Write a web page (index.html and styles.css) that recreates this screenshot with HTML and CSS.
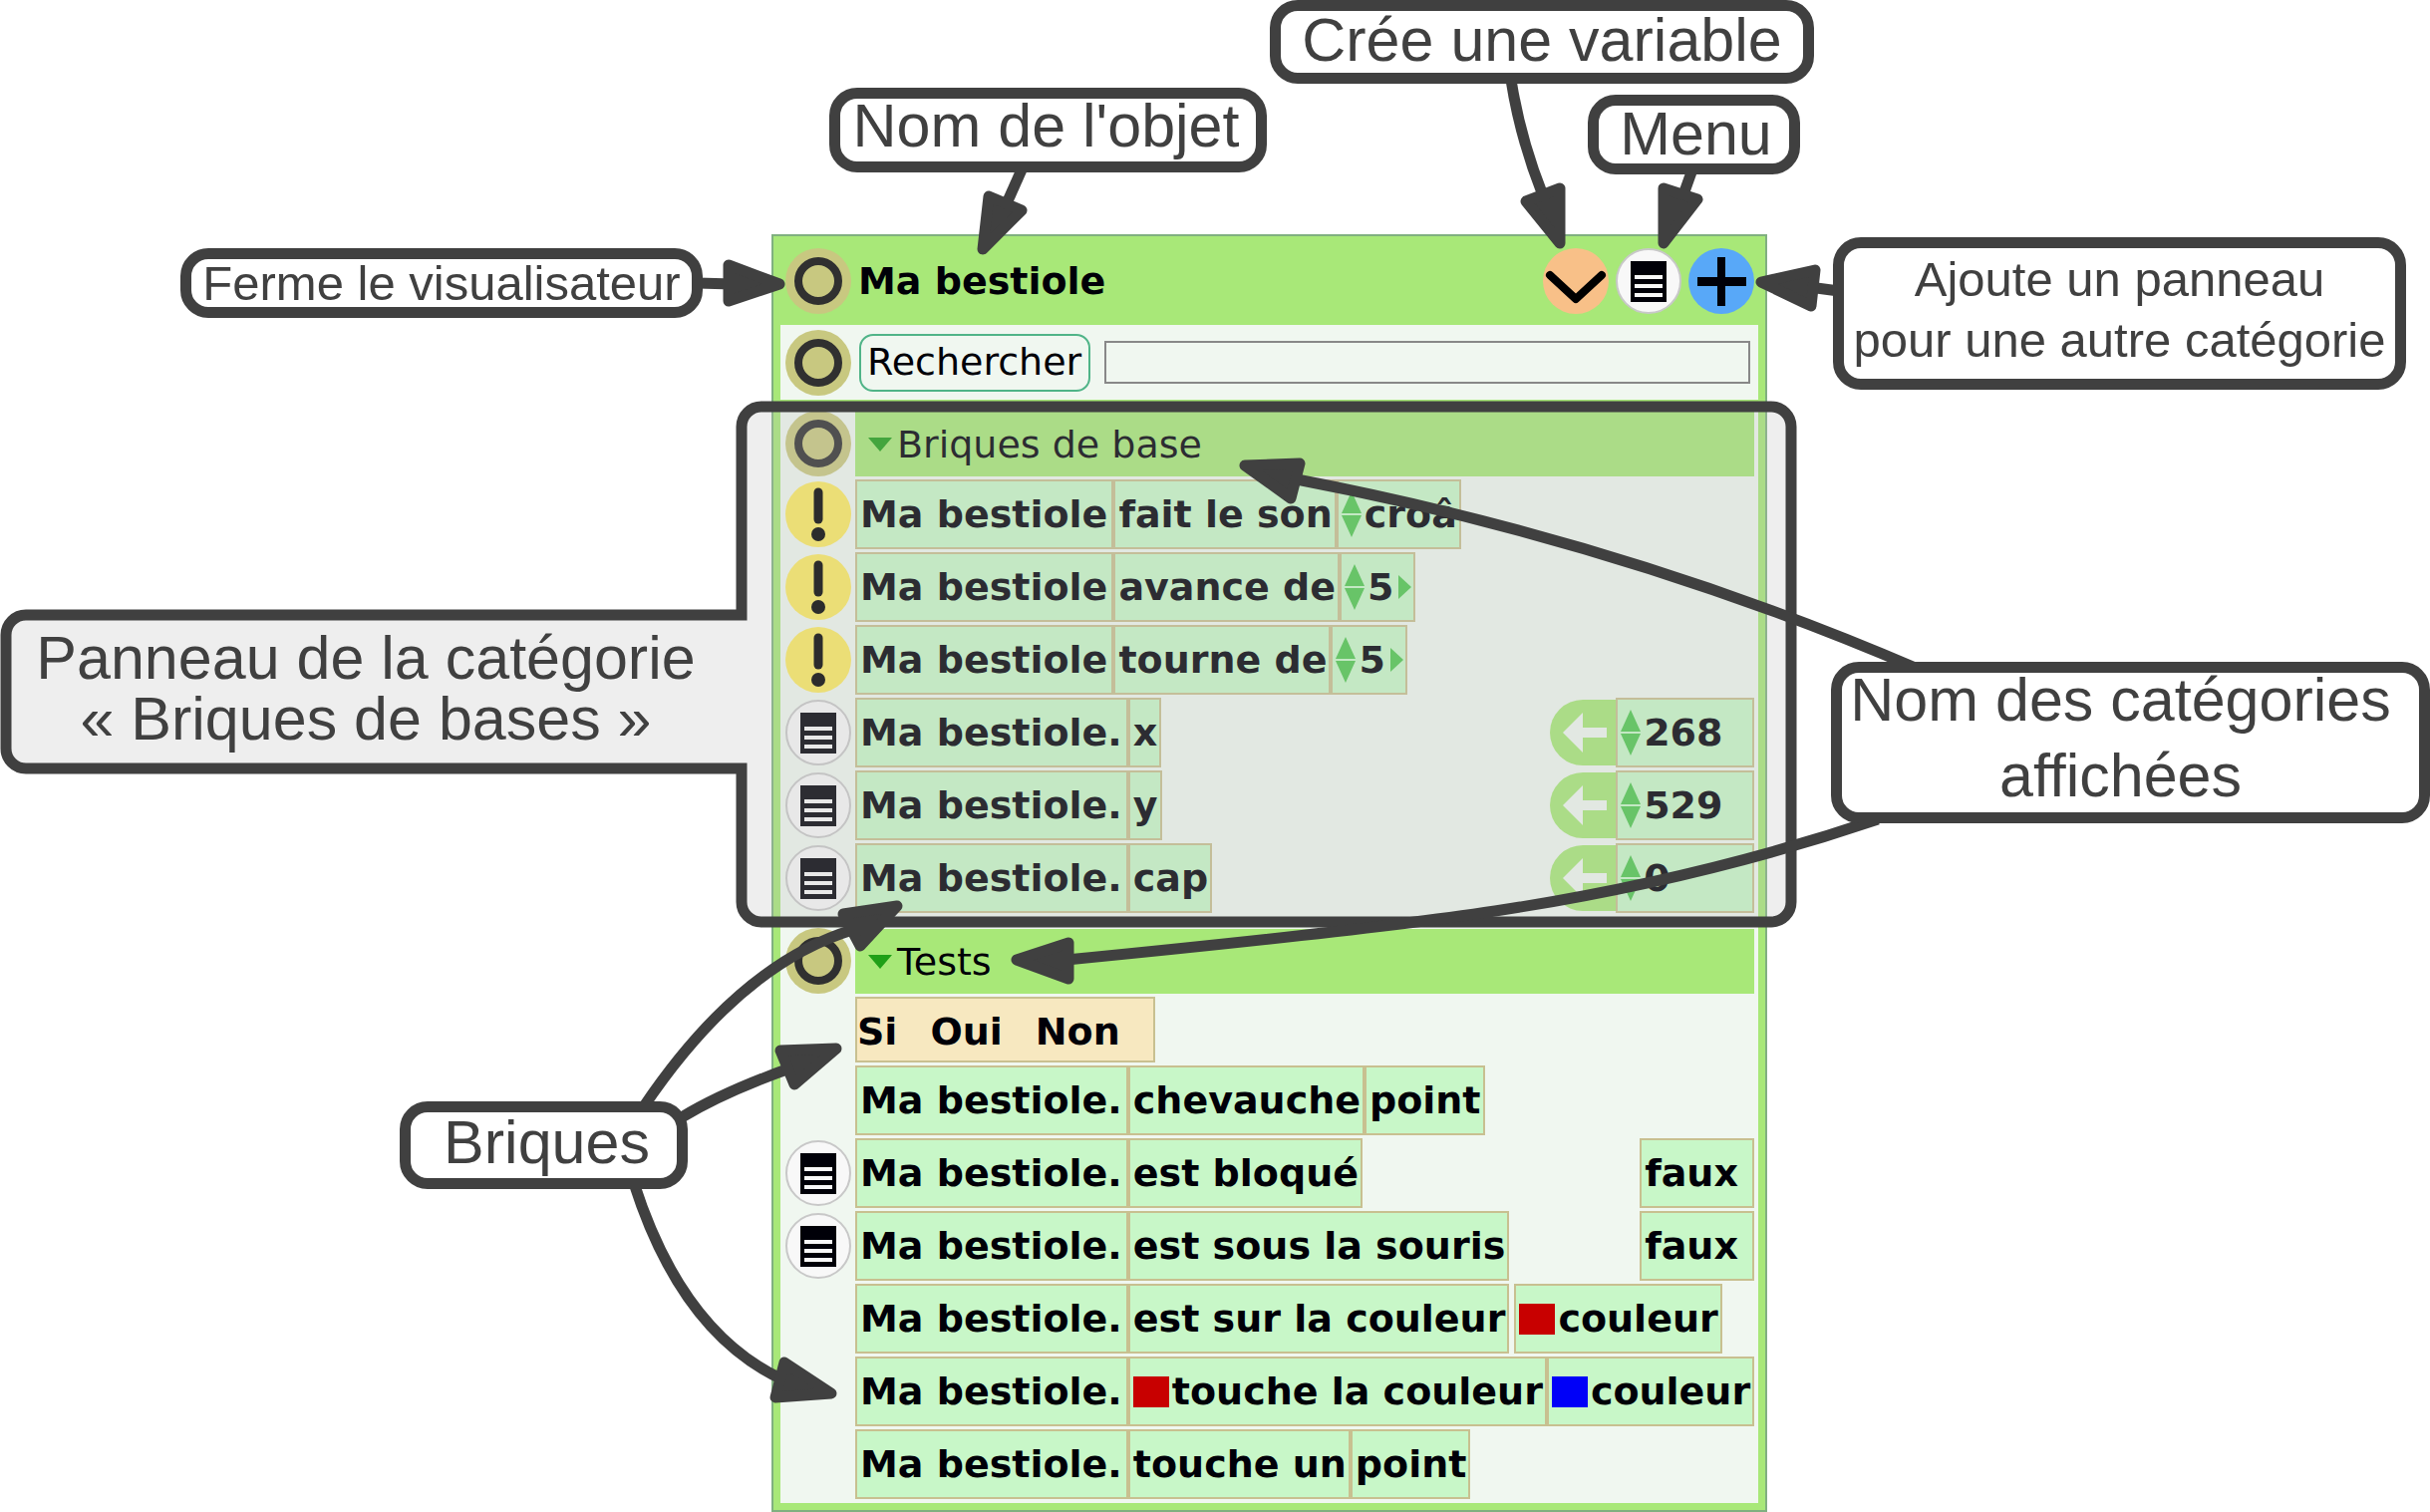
FILE: index.html
```html
<!DOCTYPE html>
<html lang="fr">
<head>
<meta charset="utf-8">
<title>Le visualisateur</title>
<link rel="stylesheet" href="styles.css">
</head>
<body>
<svg class="symbols" aria-hidden="true">
  <symbol id="ring" viewBox="0 0 66 66"><circle cx="33" cy="33" r="33" fill="#c8c880"/><circle cx="33" cy="33" r="20" fill="none" stroke="#303030" stroke-width="8"/></symbol>
  <symbol id="bang" viewBox="0 0 66 66"><circle cx="33" cy="33" r="33" fill="#fcea62"/><path d="M33 11V38" stroke="#000" stroke-width="9" stroke-linecap="round"/><circle cx="33" cy="53" r="7"/></symbol>
  <symbol id="menu" viewBox="0 0 66 66"><circle cx="33" cy="33" r="32" fill="#f8f8f8" stroke="#c8c8c8" stroke-width="2"/><path fill="#000008" d="M15 13H51V54H15Z"/><path fill="#f8f8f8" d="M19 27H47V31H19ZM19 36H47V40H19ZM19 45H47V49H19Z"/></symbol>
  <symbol id="down" viewBox="0 0 66 66"><circle cx="33" cy="33" r="33" fill="#f8c088"/><path d="M7 27L33 51L59 27" fill="none" stroke="#000" stroke-width="8" stroke-linecap="round" stroke-linejoin="round"/></symbol>
  <symbol id="plus" viewBox="0 0 66 66"><circle cx="33" cy="33" r="33" fill="#58a8f8"/><path fill="#000008" d="M9 29H58V38H9ZM29 9H37V58H29Z"/></symbol>
  <symbol id="spin" viewBox="0 0 20 46"><path d="M10 0L20 22H0ZM0 24H20L10 46Z" fill="#50c850"/></symbol>
  <symbol id="next" viewBox="0 0 13 24"><path d="M0 0L13 12L0 24Z" fill="#50c850"/></symbol>
  <symbol id="fold" viewBox="0 0 24 14"><path d="M0 0H24L12 14Z" fill="#20a018"/></symbol>
  <symbol id="assign" viewBox="0 0 66 66"><path d="M66 0H33A33 33 0 0 0 33 66H66Z" fill="#a8e878"/><path d="M13 33L33 13V28H57V38H33V53Z" fill="#f0f7f0"/></symbol>
</svg>

<figure class="figure">
  <main class="viewer">
    <header class="viewer-head">
      <button class="icon" aria-label="Fermer"><svg><use href="#ring"/></svg></button>
      <h1 class="name">Ma bestiole</h1>
      <button class="icon" aria-label="Créer une variable"><svg><use href="#down"/></svg></button>
      <button class="icon" aria-label="Menu"><svg><use href="#menu"/></svg></button>
      <button class="icon" aria-label="Ajouter un panneau"><svg><use href="#plus"/></svg></button>
    </header>

    <form class="section search">
      <button type="button" class="icon" aria-label="Fermer la recherche"><svg><use href="#ring"/></svg></button>
      <button type="button" class="search-button">Rechercher</button>
      <input class="search-field" type="text" aria-label="Texte à rechercher">
    </form>

    <section class="section">
      <div class="row"><button class="icon" aria-label="Fermer la catégorie"><svg><use href="#ring"/></svg></button>
        <h2 class="band"><svg class="fold"><use href="#fold"/></svg>Briques de base</h2></div>
      <div class="row"><button class="icon" aria-label="Exécuter"><svg><use href="#bang"/></svg></button>
        <div class="tiles"><span class="tile">Ma bestiole</span><span class="tile">fait le son</span><span class="tile"><svg class="spin"><use href="#spin"/></svg>croâ</span></div></div>
      <div class="row"><button class="icon" aria-label="Exécuter"><svg><use href="#bang"/></svg></button>
        <div class="tiles"><span class="tile">Ma bestiole</span><span class="tile">avance de</span><span class="tile"><svg class="spin"><use href="#spin"/></svg>5<svg class="next"><use href="#next"/></svg></span></div></div>
      <div class="row"><button class="icon" aria-label="Exécuter"><svg><use href="#bang"/></svg></button>
        <div class="tiles"><span class="tile">Ma bestiole</span><span class="tile">tourne de</span><span class="tile"><svg class="spin"><use href="#spin"/></svg>5<svg class="next"><use href="#next"/></svg></span></div></div>
      <div class="row"><button class="icon" aria-label="Menu de x"><svg><use href="#menu"/></svg></button>
        <div class="tiles"><span class="tile">Ma bestiole.</span><span class="tile">x</span><svg class="assign"><use href="#assign"/></svg><span class="tile value"><svg class="spin"><use href="#spin"/></svg>268</span></div></div>
      <div class="row"><button class="icon" aria-label="Menu de y"><svg><use href="#menu"/></svg></button>
        <div class="tiles"><span class="tile">Ma bestiole.</span><span class="tile">y</span><svg class="assign"><use href="#assign"/></svg><span class="tile value"><svg class="spin"><use href="#spin"/></svg>529</span></div></div>
      <div class="row"><button class="icon" aria-label="Menu de cap"><svg><use href="#menu"/></svg></button>
        <div class="tiles"><span class="tile">Ma bestiole.</span><span class="tile">cap</span><svg class="assign"><use href="#assign"/></svg><span class="tile value"><svg class="spin"><use href="#spin"/></svg>0</span></div></div>
    </section>

    <section class="section">
      <div class="row"><button class="icon" aria-label="Fermer la catégorie"><svg><use href="#ring"/></svg></button>
        <h2 class="band"><svg class="fold"><use href="#fold"/></svg>Tests</h2></div>
      <div class="row"><div class="tiles"><span class="tile test"><span>Si</span><span>Oui</span><span>Non</span></span></div></div>
      <div class="row"><div class="tiles"><span class="tile">Ma bestiole.</span><span class="tile">chevauche</span><span class="tile">point</span></div></div>
      <div class="row"><button class="icon" aria-label="Menu de est bloqué"><svg><use href="#menu"/></svg></button>
        <div class="tiles"><span class="tile">Ma bestiole.</span><span class="tile">est bloqué</span><span class="tile result">faux</span></div></div>
      <div class="row"><button class="icon" aria-label="Menu de est sous la souris"><svg><use href="#menu"/></svg></button>
        <div class="tiles"><span class="tile">Ma bestiole.</span><span class="tile">est sous la souris</span><span class="tile result">faux</span></div></div>
      <div class="row"><div class="tiles"><span class="tile">Ma bestiole.</span><span class="tile">est sur la couleur</span><span class="tile apart"><i class="swatch red"></i>couleur</span></div></div>
      <div class="row"><div class="tiles"><span class="tile">Ma bestiole.</span><span class="tile"><i class="swatch red"></i>touche la couleur</span><span class="tile"><i class="swatch blue"></i>couleur</span></div></div>
      <div class="row"><div class="tiles"><span class="tile">Ma bestiole.</span><span class="tile">touche un</span><span class="tile">point</span></div></div>
    </section>
  </main>

  <svg class="lines" viewBox="0 0 2438 1517" aria-hidden="true">
    <path class="zone" d="M764 408H1777A20 20 0 0 1 1797 428V905A20 20 0 0 1 1777 925H764A20 20 0 0 1 744 905V771H26A20 20 0 0 1 6 751V637A20 20 0 0 1 26 617H744V428A20 20 0 0 1 764 408Z"/>
    <g class="shafts">
      <path d="M1516 80Q1525 138 1548 196"/>
      <path d="M1698 170L1688 198"/>
      <path d="M1026 168L1010 204"/>
      <path d="M700 284L735 285"/>
      <path d="M1845 292L1815 288"/>
      <path d="M1296 480Q1627 543 1924 671"/>
      <path d="M1884 822Q1704 883 1500 914Q1367 934 1070 963"/>
      <path d="M646 1110Q742 968 855 933"/>
      <path d="M684 1121Q725 1096 792 1072"/>
      <path d="M636 1187Q684 1337 785 1384"/>
    </g>
    <g class="heads">
      <path d="M1565 189V244L1531 202Z"/>
      <path d="M1669 189L1703 200L1669 244Z"/>
      <path d="M992 197L1025 211L986 250Z"/>
      <path d="M731 266V302L782 285Z"/>
      <path d="M1767 283L1821 271L1817 307Z"/>
      <path d="M1249 467L1304 465L1295 500Z"/>
      <path d="M1020 963L1072 946V982Z"/>
      <path d="M900 909L846 917L863 949Z"/>
      <path d="M839 1052L783 1054L797 1088Z"/>
      <path d="M834 1398L787 1367L778 1402Z"/>
    </g>
  </svg>

  <figcaption>
    <p class="note close">Ferme le visualisateur</p>
    <p class="note object">Nom de l'objet</p>
    <p class="note variable">Crée une variable</p>
    <p class="note options">Menu</p>
    <p class="note add">Ajoute un panneau<br>pour une autre catégorie</p>
    <p class="note categories">Nom des catégories<br>affichées</p>
    <p class="note bricks">Briques</p>
    <p class="note plain">Panneau de la catégorie<br>« Briques de bases »</p>
  </figcaption>
</figure>
</body>
</html>
```
FILE: styles.css
```css
* { box-sizing: border-box; }

body {
  margin: 0;
  background: #fff;
  color: #000008;
  font: 38px/44px "DejaVu Sans", sans-serif;
}

button, input { margin: 0; font: inherit; color: inherit; }
svg { display: block; flex: none; }
.symbols { position: absolute; width: 0; height: 0; }

/* The figure leaves room round the viewer for its callouts. */
.figure {
  position: relative;
  width: max-content;
  margin: 0 auto;
  padding: 235px 665px 0 774px;
}

.viewer {
  min-width: 999px;
  display: flex;
  flex-direction: column;
  gap: 2px;
  padding: 0 7px 7px;
  border: 2px solid #80b080;
  background: #a8e878;
}

.viewer-head {
  display: flex;
  align-items: center;
  gap: 7px;
  height: 89px;
  margin-bottom: -2px;
  padding: 0 4px 0 5px;
}
.name { flex: 1; margin: 0; font-size: 38px; }

.icon {
  width: 66px;
  height: 66px;
  padding: 0;
  border: 0;
  border-radius: 50%;
  background: none;
}
.icon svg { width: 66px; height: 66px; }

.section {
  display: flex;
  flex-direction: column;
  gap: 3px;
  padding: 10px 4px 4px 0;
  background: #f0f7f0;
}

.search {
  flex-direction: row;
  align-items: center;
  gap: 8px;
  height: 75px;
  padding: 0 8px 0 5px;
}
.search-button {
  height: 58px;
  margin-right: 6px;
  padding: 0 7px 2px 6px;
  border: 2px solid #50b488;
  border-radius: 14px;
  background: none;
}
.search-field {
  flex: 1;
  min-width: 0;
  height: 43px;
  border: 2px solid #888;
  background: none;
}

.row {
  display: grid;
  grid-template-columns: 75px 1fr;
  align-items: center;
}
.row .icon { margin-left: 5px; }
.row > .band, .row > .tiles { grid-column: 2; }

.band {
  display: flex;
  align-items: center;
  gap: 5px;
  height: 65px;
  margin: 0;
  padding-left: 13px;
  background: #a8e878;
  font-size: 38px;
  font-weight: 400;
}
.fold { width: 24px; height: 14px; }
.row:first-child .icon { margin-top: -1px; }

.tiles { display: flex; align-items: center; font-weight: 700; }
.tile {
  display: flex;
  align-items: center;
  height: 70px;
  padding: 0 2px 0 3px;
  border: 2px solid #c8c090;
  background: #c8f7c8;
  white-space: nowrap;
}
.tile:first-child { padding-right: 4px; }
.tile.test { width: 301px; height: 66px; gap: 33px; padding: 3px 0 0; background: #f7e8c0; }
.apart { margin-left: 5px; }
.result { width: 115px; margin-left: auto; }
.value { width: 139px; }
.spin { width: 20px; height: 46px; margin-right: 3px; }
.next { width: 13px; height: 24px; margin-left: 5px; }
.assign { width: 66px; height: 66px; margin-left: auto; }
.swatch { width: 36px; height: 31px; margin-right: 3px; }
.red { background: #c80000; }
.blue { background: #0000f8; }

/* Callouts and their arrows lie over the viewer. */
.lines {
  position: absolute;
  left: 0;
  top: 0;
  width: 2438px;
  height: 1517px;
  fill: none;
  stroke: #404040;
  stroke-width: 11px;
}
.zone { fill: rgba(183, 183, 183, .24); }
.heads { fill: #404040; stroke-linejoin: round; }

.note {
  position: absolute;
  display: flex;
  flex-direction: column;
  justify-content: center;
  margin: 0;
  border: 11px solid #404040;
  border-radius: 28px;
  background: #fff;
  color: #404040;
  font: 61px/61px "Liberation Sans", sans-serif;
  text-align: center;
  white-space: nowrap;
}
.close { left: 181px; top: 249px; width: 524px; height: 70px; font-size: 49px; }
.object { left: 832px; top: 88px; width: 439px; height: 85px; padding: 0 4px 8px 0; }
.variable { left: 1274px; top: 0; width: 546px; height: 84px; padding-bottom: 4px; }
.options { left: 1593px; top: 95px; width: 213px; height: 80px; padding: 0 0 2px 4px; }
.add { left: 1839px; top: 238px; width: 575px; height: 153px; padding-bottom: 7px; font-size: 49px; }
.categories { left: 1837px; top: 664px; width: 601px; height: 162px; padding: 0 20px 10px 0; line-height: 76px; }
.bricks { left: 401px; top: 1105px; width: 289px; height: 88px; padding: 0 0 6px 6px; }
.plain { left: 0; top: 611px; width: 734px; height: 160px; border: 0; background: none; }
```
